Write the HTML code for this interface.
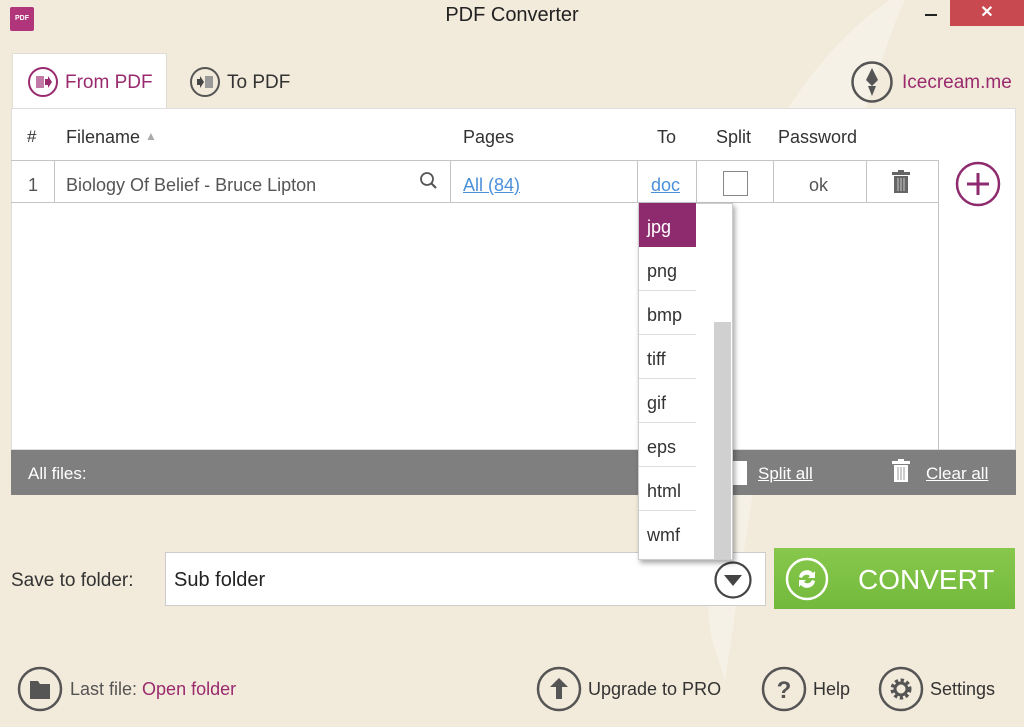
<!DOCTYPE html>
<html><head><meta charset="utf-8"><style>
*{margin:0;padding:0;box-sizing:border-box}
body{width:1024px;height:727px;background:#f2eada;font-family:"Liberation Sans",sans-serif;position:relative;overflow:hidden;color:#333}
.a{position:absolute}
.t{font-size:19px}
.cell{position:absolute;font-size:18px;color:#555}
.vl{position:absolute;width:1px;background:#c4c4c4}
.hl{position:absolute;height:1px;background:#c4c4c4}
.dd{position:absolute;left:639px;width:57px;height:44px;font-size:18px;color:#333;padding:14px 0 0 8px;border-bottom:1px solid #ddd}
a{color:#4a90d9;text-decoration:underline}
</style></head><body>
<svg class="a" style="left:0;top:0" width="1024" height="727"><path d="M890 0 C 800 60, 720 200, 705 330 C 695 450, 700 560, 712 640 L 725 680 C 745 560, 770 300, 840 170 C 870 110, 885 40, 905 0 Z" fill="#f6f1e6"/></svg>
<div class="a" style="left:10px;top:7px;width:24px;height:24px;background:#b0357a;border-radius:2px;color:#fff;font-size:7px;font-weight:bold;text-align:center;line-height:24px">PDF</div>
<div class="a" style="left:0;width:1024px;top:4px;text-align:center;font-size:20px;color:#222">PDF Converter</div>
<div class="a" style="left:925px;top:14px;width:12px;height:2px;background:#222"></div>
<div class="a" style="left:950px;top:0;width:74px;height:26px;background:#c8494f;color:#fff;text-align:center;font-size:16px;font-weight:bold;line-height:25px">✕</div>
<div class="a" style="left:12px;top:53px;width:155px;height:56px;background:#fff;border:1px solid #e0ddd5;border-bottom:none"></div>
<svg class="a" style="left:27px;top:66px" width="32" height="32"><circle cx="16" cy="16" r="14" fill="none" stroke="#9a2a6e" stroke-width="2"/><rect x="9" y="10" width="8" height="12" fill="#c07aa5"/><path d="M18 13h3v-3l4 6-4 6v-3h-3z" fill="#9a2a6e"/></svg>
<div class="a t" style="left:65px;top:72px;color:#9a2a6e">From PDF</div>
<svg class="a" style="left:189px;top:66px" width="32" height="32"><circle cx="16" cy="16" r="14" fill="none" stroke="#555" stroke-width="2"/><rect x="16" y="10" width="8" height="12" fill="#999"/><path d="M8 13h3v-3l4 6-4 6v-3h-3z" fill="#444"/></svg>
<div class="a t" style="left:227px;top:72px;color:#333">To PDF</div>
<svg class="a" style="left:850px;top:60px" width="44" height="44"><circle cx="22" cy="22" r="19.5" fill="none" stroke="#555" stroke-width="2.5"/><path d="M22 8 L28 20 L22 26 L16 20 Z M18 26 L22 36 L26 26 Z" fill="#555"/></svg>
<div class="a" style="left:902px;top:72px;font-size:19px;color:#9a2a6e">Icecream.me</div>
<div class="a" style="left:11px;top:108px;width:1005px;height:342px;background:#fff;border:1px solid #ddd"></div>
<div class="cell" style="left:27px;top:127px;color:#333;font-size:17px">#</div>
<div class="cell" style="left:66px;top:127px;color:#333">Filename <span style="color:#aaa;font-size:12px;vertical-align:3px">▲</span></div>
<div class="cell" style="left:463px;top:127px;color:#333">Pages</div>
<div class="cell" style="left:657px;top:127px;color:#333">To</div>
<div class="cell" style="left:716px;top:127px;color:#333">Split</div>
<div class="cell" style="left:778px;top:127px;color:#333">Password</div>
<div class="hl" style="left:11px;top:160px;width:927px"></div>
<div class="hl" style="left:11px;top:202px;width:927px"></div>
<div class="vl" style="left:54px;top:160px;height:42px"></div>
<div class="vl" style="left:450px;top:160px;height:42px"></div>
<div class="vl" style="left:637px;top:160px;height:42px"></div>
<div class="vl" style="left:696px;top:160px;height:42px"></div>
<div class="vl" style="left:773px;top:160px;height:42px"></div>
<div class="vl" style="left:866px;top:160px;height:42px"></div>
<div class="vl" style="left:938px;top:160px;height:290px"></div>
<div class="cell" style="left:28px;top:175px">1</div>
<div class="cell" style="left:66px;top:175px">Biology Of Belief - Bruce Lipton</div>
<svg class="a" style="left:419px;top:171px" width="20" height="20"><circle cx="8" cy="8" r="6" fill="none" stroke="#555" stroke-width="1.8"/><path d="M12 12l5 5" stroke="#555" stroke-width="2.2"/></svg>
<div class="cell" style="left:463px;top:175px"><a>All (84)</a></div>
<div class="cell" style="left:651px;top:175px"><a>doc</a></div>
<div class="a" style="left:723px;top:171px;width:25px;height:25px;border:1px solid #888;background:#fff"></div>
<div class="cell" style="left:809px;top:175px">ok</div>
<svg class="a" style="left:891px;top:170px" width="20" height="24"><rect x="1" y="2" width="18" height="3" fill="#666"/><rect x="7" y="0" width="6" height="3" fill="#666"/><rect x="3" y="6" width="14" height="17" fill="#666"/><path d="M7 8v13M10 8v13M13 8v13" stroke="#ccc" stroke-width="1"/></svg>
<svg class="a" style="left:954px;top:160px" width="48" height="48"><circle cx="24" cy="24" r="21" fill="none" stroke="#8e2a6e" stroke-width="2.5"/><path d="M24 13v22M13 24h22" stroke="#8e2a6e" stroke-width="3"/></svg>
<div class="a" style="left:11px;top:450px;width:1005px;height:45px;background:#7f7f7f"></div>
<div class="a" style="left:28px;top:464px;color:#fff;font-size:17px">All files:</div>
<div class="a" style="left:730px;top:461px;width:17px;height:24px;background:#fff"></div>
<div class="a" style="left:758px;top:464px;color:#fff;font-size:17px;text-decoration:underline">Split all</div>
<svg class="a" style="left:891px;top:459px" width="20" height="24"><rect x="1" y="2" width="18" height="3" fill="#fff"/><rect x="7" y="0" width="6" height="3" fill="#fff"/><rect x="3" y="6" width="14" height="17" fill="#fff"/><path d="M7 8v13M10 8v13M13 8v13" stroke="#999" stroke-width="1"/></svg>
<div class="a" style="left:926px;top:464px;color:#fff;font-size:17px;text-decoration:underline">Clear all</div>
<div class="a" style="left:11px;top:570px;font-size:19px;color:#333">Save to folder:</div>
<div class="a" style="left:165px;top:552px;width:601px;height:54px;background:#fff;border:1px solid #ccc"></div>
<div class="a" style="left:174px;top:569px;font-size:20px;color:#222">Sub folder</div>
<svg class="a" style="left:713px;top:560px" width="40" height="40"><circle cx="20" cy="20" r="17.5" fill="none" stroke="#444" stroke-width="2.2"/><path d="M11 15h18l-9 11z" fill="#444"/></svg>
<div class="a" style="left:774px;top:548px;width:241px;height:61px;background:linear-gradient(#88c84c,#72b93c)"></div>
<svg class="a" style="left:784px;top:556px" width="46" height="46"><circle cx="23" cy="23" r="20" fill="none" stroke="#fff" stroke-width="2.5"/><path d="M15 21a8 8 0 0 1 14-4l2-2v7h-7l2-2a5 5 0 0 0-8 2z M31 25a8 8 0 0 1-14 4l-2 2v-7h7l-2 2a5 5 0 0 0 8-2z" fill="#fff"/></svg>
<div class="a" style="left:858px;top:564px;font-size:28px;color:#fff">CONVERT</div>
<div class="a" style="left:638px;top:203px;width:95px;height:357px;background:#fff;border:1px solid #ccc;box-shadow:2px 3px 5px rgba(0,0,0,.35)"></div>
<div class="a" style="left:714px;top:322px;width:17px;height:237px;background:#d0d0d0"></div>
<div class="dd" style="top:203px;background:#8e2a6e;color:#fff;border:none">jpg</div>
<div class="dd" style="top:247px">png</div>
<div class="dd" style="top:291px">bmp</div>
<div class="dd" style="top:335px">tiff</div>
<div class="dd" style="top:379px">gif</div>
<div class="dd" style="top:423px">eps</div>
<div class="dd" style="top:467px">html</div>
<div class="dd" style="top:511px;border:none">wmf</div>
<svg class="a" style="left:16px;top:665px" width="48" height="48"><circle cx="24" cy="24" r="21" fill="none" stroke="#555" stroke-width="2.5"/><path d="M14 16h8l2 3h10v15h-20z" fill="#555"/></svg>
<div class="a" style="left:70px;top:679px;font-size:18px;color:#555">Last file: <span style="color:#9a2a6e">Open folder</span></div>
<svg class="a" style="left:535px;top:665px" width="48" height="48"><circle cx="24" cy="24" r="21" fill="none" stroke="#555" stroke-width="2.5"/><path d="M24 13l-9 9h6v12h6v-12h6z" fill="#555"/></svg>
<div class="a" style="left:588px;top:679px;font-size:18px;color:#333">Upgrade to PRO</div>
<svg class="a" style="left:760px;top:665px" width="48" height="48"><circle cx="24" cy="24" r="21" fill="none" stroke="#555" stroke-width="2.5"/><text x="24" y="33" text-anchor="middle" font-family="Liberation Sans" font-weight="bold" font-size="24" fill="#555">?</text></svg>
<div class="a" style="left:813px;top:679px;font-size:18px;color:#333">Help</div>
<svg class="a" style="left:877px;top:665px" width="48" height="48"><circle cx="24" cy="24" r="21" fill="none" stroke="#555" stroke-width="2.5"/><circle cx="24" cy="24" r="8" fill="none" stroke="#555" stroke-width="5" stroke-dasharray="3 2.3"/><circle cx="24" cy="24" r="6" fill="none" stroke="#555" stroke-width="3"/></svg>
<div class="a" style="left:930px;top:679px;font-size:18px;color:#333">Settings</div>
</body></html>
